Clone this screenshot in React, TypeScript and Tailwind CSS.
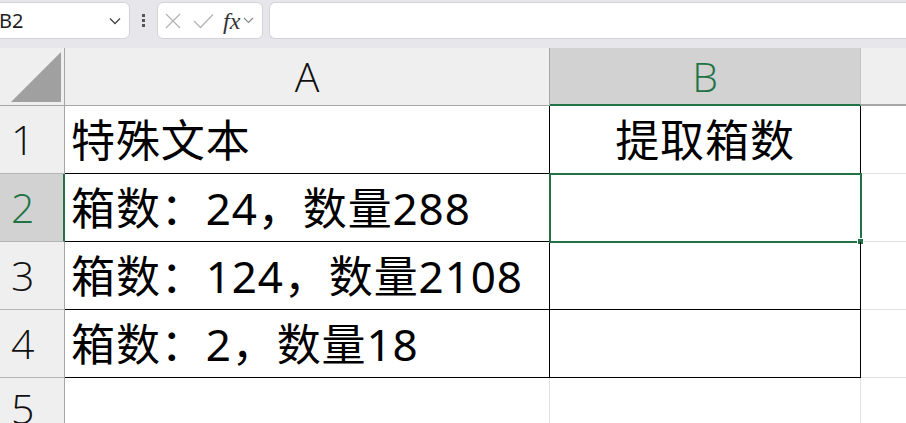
import React from 'react';

const GREEN = '#217346';

const rows = [
  { n: '1', a: '特殊文本', b: '提取箱数' },
  { n: '2', a: '箱数：24，数量288', b: '' },
  { n: '3', a: '箱数：124，数量2108', b: '' },
  { n: '4', a: '箱数：2，数量18', b: '' },
];

const cellFont = { fontFamily: '"Noto Sans", "Noto Sans CJK SC", sans-serif' };

const Toolbar = () => (
  <div className="flex h-[48px] items-start gap-0 bg-[#e6e6eb] pt-[2px]">
    {/* Name box */}
    <div className="ml-[-10px] flex h-[37px] w-[140px] items-center justify-between rounded-[6px] border border-[#d4d4d8] bg-white pl-[8px] pr-[8px]">
      <span className="text-[20px] text-[#1f1f1f]" style={{ fontFamily: '"Noto Sans", sans-serif' }}>B2</span>
      <svg width="12" height="8" viewBox="0 0 12 8" fill="none" stroke="#444" strokeWidth="1.3">
        <path d="M1 1.5 L6 6.5 L11 1.5" />
      </svg>
    </div>
    {/* vertical dots */}
    <div className="flex h-[37px] w-[27px] flex-col items-center justify-center gap-[2px]">
      <span className="h-[3px] w-[3px] bg-[#555]" />
      <span className="h-[3px] w-[3px] bg-[#555]" />
      <span className="h-[3px] w-[3px] bg-[#555]" />
    </div>
    {/* cancel / enter / fx */}
    <div className="flex h-[37px] w-[106px] items-center rounded-[6px] border border-[#d4d4d8] bg-white pl-[6px]">
      <svg width="18" height="18" viewBox="0 0 18 18" stroke="#b4b4b4" strokeWidth="1.3" fill="none">
        <path d="M2 2 L16 16 M16 2 L2 16" />
      </svg>
      <svg className="ml-[11px]" width="21" height="16" viewBox="0 0 21 16" stroke="#b4b4b4" strokeWidth="1.3" fill="none">
        <path d="M1 8 L7.5 14.5 L20 1.5" />
      </svg>
      <span className="ml-[9px] text-[24px] italic leading-none text-[#333]" style={{ fontFamily: '"Liberation Serif", serif' }}>fx</span>
      <svg className="ml-[3px]" width="11" height="7" viewBox="0 0 11 7" fill="none" stroke="#8a8a8a" strokeWidth="1.2">
        <path d="M1 1 L5.5 5.5 L10 1" />
      </svg>
    </div>
    {/* formula input */}
    <div className="ml-[6px] h-[37px] flex-1 rounded-l-[6px] border border-r-0 border-[#d4d4d8] bg-white" />
  </div>
);

const HeaderRow = () => (
  <div className="flex h-[58px]" style={{ fontFamily: '"Open Sans", sans-serif' }}>
    <div className="relative w-[65px] border-b border-r border-[#a6a6a6] bg-[#efefef]">
      <svg className="absolute left-[11px] top-[4px]" width="50" height="50" viewBox="0 0 50 50">
        <path d="M50 0 L50 50 L0 50 Z" fill="#a0a0a0" />
      </svg>
    </div>
    <div className="flex w-[485px] items-center justify-center border-b border-r border-[#a6a6a6] bg-[#efefef] text-[41px] font-light leading-none text-[#111]">
      A
    </div>
    <div className="flex w-[311px] items-center justify-center border-b-2 border-r border-[#c4c4c4] bg-[#d2d2d2] text-[41px] font-light leading-none" style={{ borderBottomColor: GREEN, color: GREEN }}>
      B
    </div>
    <div className="flex-1 border-b-2 border-[#a6a6a6] bg-[#efefef]" />
  </div>
);

const DataRow = ({ n, a, b }: { n: string; a: string; b: string }) => {
  const active = n === '2';
  return (
    <div className="flex h-[68px]">
      <div
        className={`flex w-[65px] items-center pl-[11px] text-[41px] font-light leading-none ${
          active ? 'border-r-2 bg-[#d2d2d2]' : 'border-r bg-[#efefef] text-[#111]'
        } border-b border-b-[#b4b4b4]`}
        style={{
          fontFamily: '"Open Sans", sans-serif',
          borderRightColor: active ? GREEN : '#a6a6a6',
          color: active ? GREEN : undefined,
        }}
      >
        {n}
      </div>
      <div className="flex w-[485px] items-center border-b border-r border-black pl-[6px] pt-[1px] text-[44px] leading-none tracking-[0.9px] text-black" style={cellFont}>
        {a}
      </div>
      <div className="relative flex w-[311px] items-center justify-center border-b border-r border-black pt-[1px] text-[44px] leading-none tracking-[0.9px] text-black" style={cellFont}>
        {b}
        {active && (
          <>
            <div className="pointer-events-none absolute -left-[1px] -top-[1px] h-[70px] w-[313px] border-2" style={{ borderColor: GREEN }} />
            <div className="absolute -bottom-[4px] -right-[4px] h-[7px] w-[7px] border border-white" style={{ backgroundColor: GREEN }} />
          </>
        )}
      </div>
      <div className="flex-1 border-b border-[#e1e1e1] bg-white" />
    </div>
  );
};

const LastRow = () => (
  <div className="flex h-[60px]">
    <div className="w-[65px] border-r border-[#a6a6a6] bg-[#efefef] pl-[11px] pt-[10px] text-[41px] font-light leading-none text-[#111]" style={{ fontFamily: '"Open Sans", sans-serif' }}>
      5
    </div>
    <div className="w-[485px] border-r border-[#e1e1e1] bg-white" />
    <div className="w-[311px] border-r border-[#e1e1e1] bg-white" />
    <div className="flex-1 bg-white" />
  </div>
);

export default function App() {
  return (
    <div className="h-[423px] w-[906px] overflow-hidden bg-white">
      <Toolbar />
      <HeaderRow />
      {rows.map((r) => (
        <DataRow key={r.n} {...r} />
      ))}
      <LastRow />
    </div>
  );
}
